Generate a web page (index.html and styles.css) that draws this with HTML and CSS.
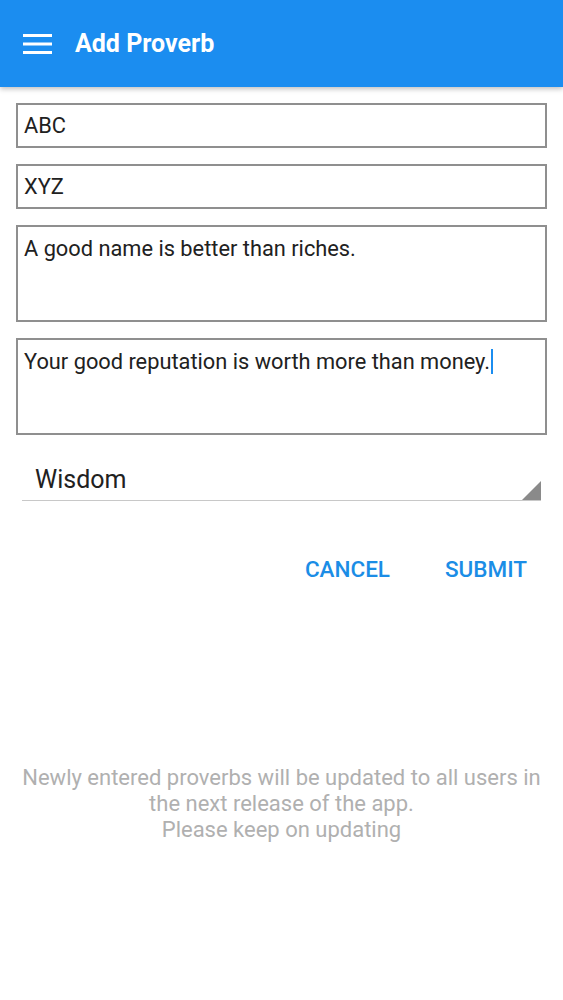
FILE: index.html
```html
<!DOCTYPE html>
<html lang="en">
<head>
<meta charset="utf-8">
<title>Add Proverb</title>
<link rel="stylesheet" href="styles.css">
</head>
<body>
<header class="appbar">
  <svg class="menu" width="29" height="22" viewBox="0 0 29 22" aria-hidden="true">
    <rect x="0" y="1" width="29" height="3" fill="#fff"/>
    <rect x="0" y="9.5" width="29" height="3" fill="#fff"/>
    <rect x="0" y="18" width="29" height="3" fill="#fff"/>
  </svg>
  <h1 class="title">Add Proverb</h1>
</header>
<main class="form">
  <div class="field single">ABC</div>
  <div class="field single">XYZ</div>
  <div class="field multi">A good name is better than riches.</div>
  <div class="field multi">Your good reputation is worth more than money.<span class="caret"></span></div>
  <div class="spinner"><span class="spinner-text">Wisdom</span></div>
  <div class="actions">
    <span class="btn">CANCEL</span>
    <span class="btn">SUBMIT</span>
  </div>
  <p class="note">Newly entered proverbs will be updated to all users in<br>the next release of the app.<br>Please keep on updating</p>
</main>
</body>
</html>
```
FILE: styles.css
```css
html, body {
  margin: 0;
  padding: 0;
  background: #fff;
}
body {
  font-family: Roboto, "Liberation Sans", sans-serif;
  color: #212121;
}
.appbar {
  height: 87px;
  background: #1b8df0;
  display: flex;
  align-items: center;
  padding-left: 23px;
  gap: 23px;
  box-shadow: 0 2px 5px rgba(0,0,0,0.25);
  position: relative;
}
.menu {
  display: block;
}
.title {
  margin: 0;
  color: #fff;
  font-size: 25px;
  font-weight: 700;
}
.form {
  padding: 16px 16px 0;
  display: flex;
  flex-direction: column;
}
.field {
  box-sizing: border-box;
  border: 2px solid #8f8f8f;
  font-size: 21.8px;
  padding: 0 6px;
  color: #212121;
}
.field + .field {
  margin-top: 16px;
}
.single {
  height: 45px;
  line-height: 41px;
}
.multi {
  height: 97px;
  line-height: 28px;
  padding-top: 8px;
}
.caret {
  display: inline-block;
  width: 2px;
  height: 25px;
  background: #1b8df0;
  vertical-align: -5px;
  margin-left: 1px;
}
.spinner {
  margin: 16px 6px 0;
  height: 50px;
  box-sizing: border-box;
  border-bottom: 1px solid #c8c8c8;
  padding: 8px 0 0 13px;
  display: flex;
  align-items: center;
  position: relative;
}
.spinner-text {
  font-size: 25px;
  color: #212121;
}
.spinner::after {
  content: "";
  position: absolute;
  right: 0;
  bottom: 0;
  width: 0;
  height: 0;
  border-left: 19px solid transparent;
  border-bottom: 19px solid #8a8a8a;
}
.actions {
  margin-top: 44px;
  height: 48px;
  display: flex;
  justify-content: flex-end;
  align-items: center;
  gap: 55px;
  padding-right: 20px;
}
.btn {
  color: #1b8de6;
  font-size: 22.5px;
  font-weight: 500;
}
.note {
  margin: 172px 0 0;
  text-align: center;
  color: #b0b0b0;
  font-size: 22px;
  line-height: 26px;
}
```
